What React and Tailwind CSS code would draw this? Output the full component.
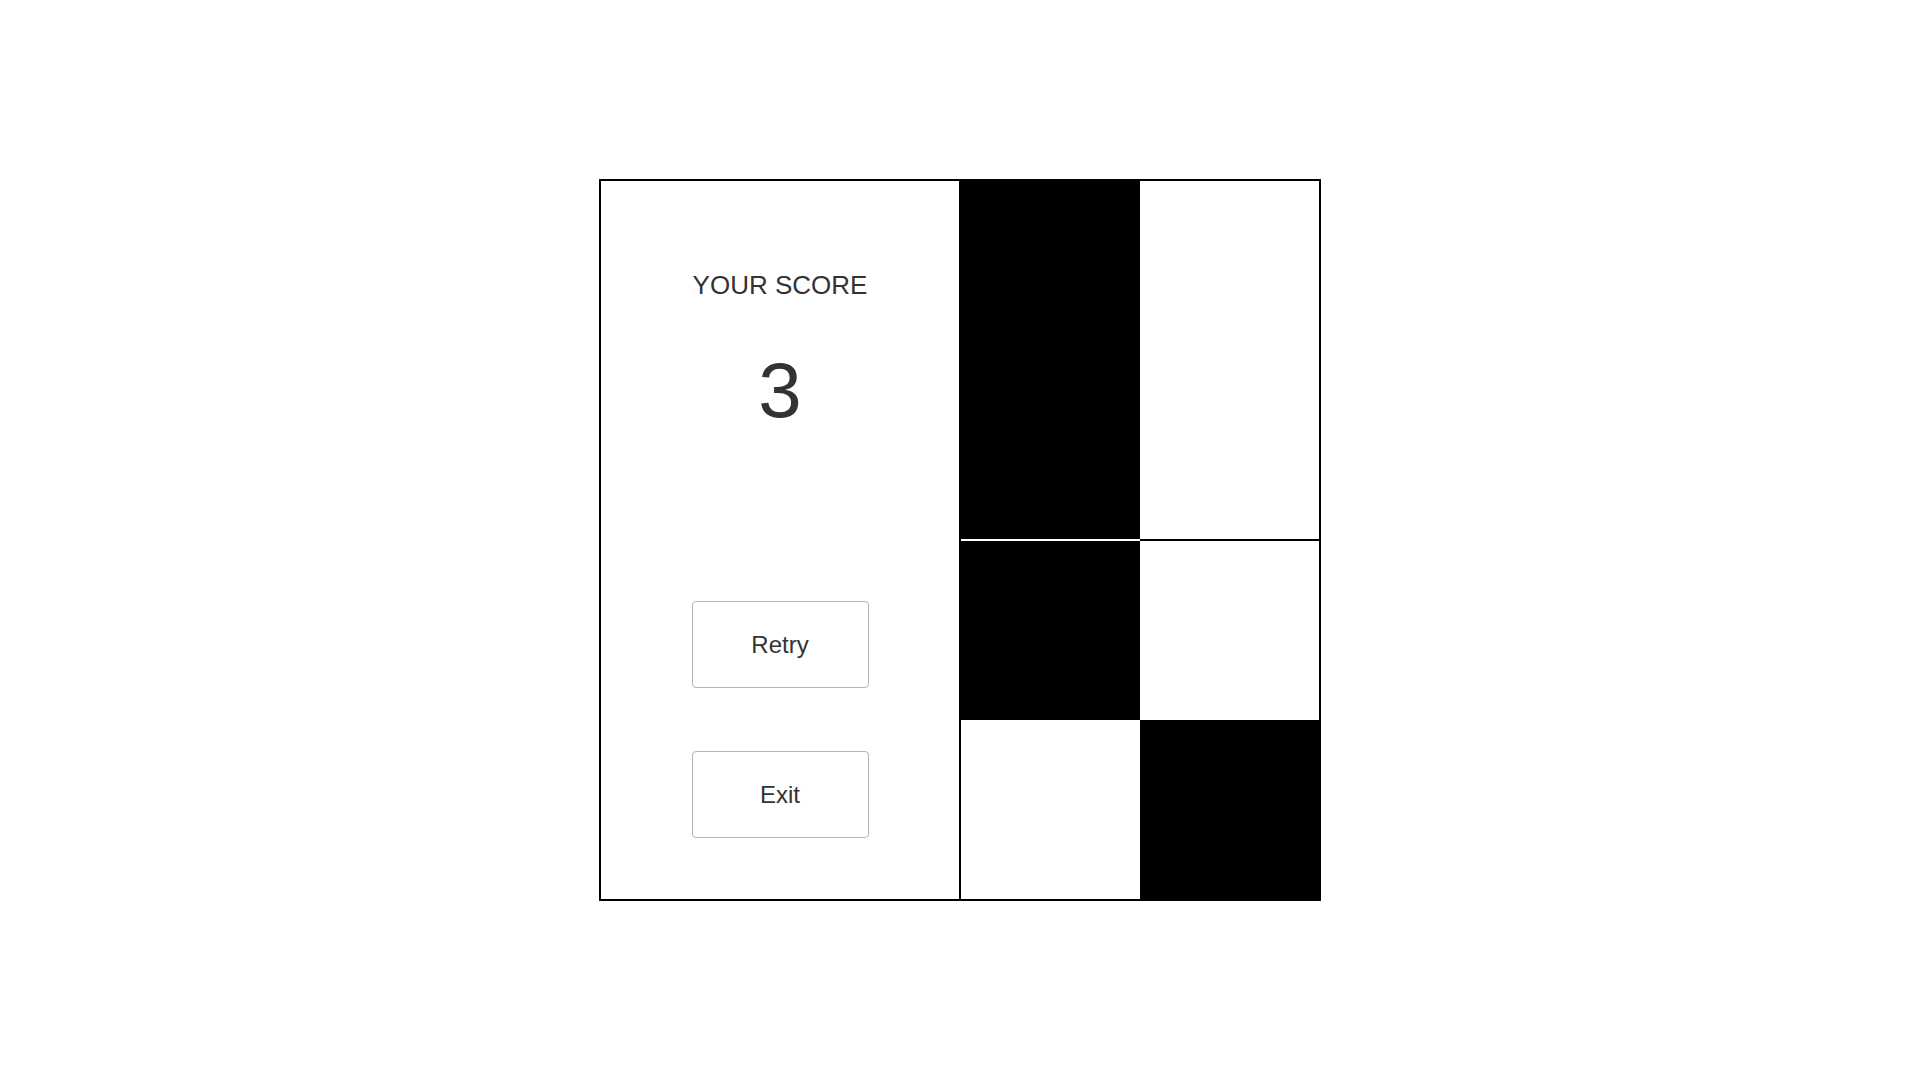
export default function App() {
  const font = { fontFamily: '"Liberation Sans", Arial, sans-serif' };
  return (
    <div className="w-[1920px] h-[1080px] bg-white flex items-center justify-center" style={font}>
      <div className="w-[722px] h-[722px] border-2 border-black flex">
        <div className="w-[360px] h-full border-r-2 border-black flex flex-col items-center pt-[89px] text-[#333]">
          <div className="text-[26px] leading-[30px]">YOUR SCORE</div>
          <div className="text-[78px] leading-[90px] mt-[45px]">3</div>
          <button className="mt-[166px] w-[177px] h-[87px] border border-[#b4b4b4] rounded-[4px] bg-white text-[24px] text-[#333] flex items-center justify-center">
            Retry
          </button>
          <button className="mt-[63px] w-[177px] h-[87px] border border-[#b4b4b4] rounded-[4px] bg-white text-[24px] text-[#333] flex items-center justify-center">
            Exit
          </button>
        </div>
        <div className="flex-1 grid grid-cols-2 grid-rows-[360px_179px_179px]">
          <div className="bg-black border-b-2 border-white"></div>
          <div className="bg-white border-b-2 border-black"></div>
          <div className="bg-black"></div>
          <div className="bg-white"></div>
          <div className="bg-white"></div>
          <div className="bg-black"></div>
        </div>
      </div>
    </div>
  );
}
